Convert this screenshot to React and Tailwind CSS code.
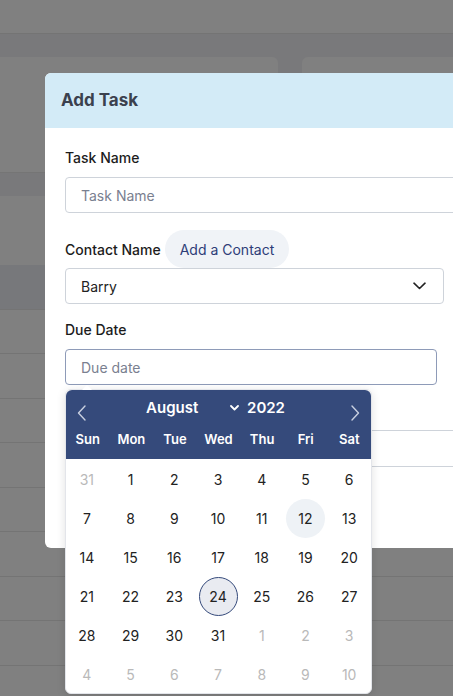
import React from "react";

const weeks = [
  [[31, 0], [1, 1], [2, 1], [3, 1], [4, 1], [5, 1], [6, 1]],
  [[7, 1], [8, 1], [9, 1], [10, 1], [11, 1], [12, 1], [13, 1]],
  [[14, 1], [15, 1], [16, 1], [17, 1], [18, 1], [19, 1], [20, 1]],
  [[21, 1], [22, 1], [23, 1], [24, 1], [25, 1], [26, 1], [27, 1]],
  [[28, 1], [29, 1], [30, 1], [31, 1], [1, 0], [2, 0], [3, 0]],
  [[4, 0], [5, 0], [6, 0], [7, 0], [8, 0], [9, 0], [10, 0]],
];

const dayNames = ["Sun", "Mon", "Tue", "Wed", "Thu", "Fri", "Sat"];

function DayCell({ d, cur }) {
  const selected = cur && d === 24;
  const today = cur && d === 12;
  let cls =
    "w-[39px] h-[39px] rounded-full flex items-center justify-center text-[14px] ";
  if (!cur) cls += "text-[#b9b9b9]";
  else cls += "text-[#222222]";
  if (selected) cls += " bg-[#e9ebf1] border border-[#354a7b]";
  if (today) cls += " bg-[#eef2f6]";
  return (
    <div className="w-[44px] h-[39px] flex items-center justify-center">
      <div className={cls}>{d}</div>
    </div>
  );
}

export default function App() {
  const rows = Array.from({ length: 9 });
  return (
    <div
      className="relative w-[453px] h-[696px] overflow-hidden bg-[#79797b]"
      style={{ fontFamily: "Inter, 'Noto Sans', sans-serif" }}
    >
      {/* background page (under overlay) */}
      <div className="h-[34px] bg-[#808080] border-b border-[#747474]" />
      <div className="flex gap-[24px] mt-[23px]">
        <div className="w-[278px] h-[116px] rounded-r-md bg-[#808080] border-b border-[#757575]" />
        <div className="flex-1 h-[116px] rounded-l-md bg-[#808080] border-b border-[#757575]" />
      </div>
      <div className="mt-[23px] bg-[#808080]">
        <div className="h-[69px]" />
        <div className="h-[44.5px] bg-[#77787b] border-b border-[#747474]" />
        {rows.map((_, i) => (
          <div key={i} className="h-[44.5px] border-b border-[#747474]" />
        ))}
      </div>

      {/* modal */}
      <div className="absolute left-[45px] top-[73px] w-[520px] h-[475px] rounded-l-md bg-white overflow-hidden">
        <div className="h-[55px] bg-[#d3ebf7] flex items-center pl-[16px]">
          <span className="text-[17px] font-bold text-[#3b414e]">Add Task</span>
        </div>
        <div className="px-[20px] pt-[20px]">
          <div className="text-[14px] leading-[20px] font-medium text-[#1c1c1c]">Task Name</div>
          <div className="mt-[9px] h-[36px] w-full rounded-[4px] border border-[#ced3da] flex items-center pl-[15px] text-[14px] text-[#7a8090]">
            Task Name
          </div>
          <div className="mt-[17px] h-[38px] flex items-center">
            <span className="text-[14px] font-medium text-[#1c1c1c]">Contact Name</span>
            <span className="ml-[4px] h-[38px] px-[15px] rounded-full bg-[#f0f3f7] flex items-center text-[14px] text-[#2e3d78]">
              Add a Contact
            </span>
          </div>
          <div className="h-[36px] w-[379px] rounded-[4px] border border-[#ced3da] flex items-center justify-between pl-[15px] pr-[17px] text-[14px] text-[#222222]">
            <span>Barry</span>
            <svg width="13" height="8" viewBox="0 0 13 8" fill="none">
              <path d="M1 1.2 L6.5 6.5 L12 1.2" stroke="#222" strokeWidth="1.6" strokeLinecap="round" strokeLinejoin="round" />
            </svg>
          </div>
          <div className="mt-[16px] text-[14px] leading-[20px] font-medium text-[#1c1c1c]">Due Date</div>
          <div className="mt-[9px] h-[36px] w-[372px] rounded-[4px] border border-[#8e9bb8] flex items-center pl-[15px] text-[14px] text-[#7a8090]">
            Due date
          </div>
          <div className="mt-[10px] text-[14px] leading-[20px] font-medium text-[#1c1c1c]">Assigned To</div>
          <div className="mt-[15px] h-[37px] w-full rounded-[4px] border border-[#ced3da]" />
        </div>
      </div>

      {/* date picker popover */}
      <div className="absolute left-[65px] top-[389px] w-[307px] h-[305px] rounded-md bg-white border border-[#e3e5ea] shadow-[0_2px_10px_rgba(0,0,0,0.12)]">
        <div className="h-[69px] rounded-t-md bg-[#354a7b] text-white">
          <div className="relative h-[36px] flex items-center justify-center">
            <svg className="absolute left-[11px] top-[15px]" width="9" height="16" viewBox="0 0 9 16" fill="none">
              <path d="M8 1 L1.5 8 L8 15" stroke="#c9d0e0" strokeWidth="1.4" strokeLinecap="round" strokeLinejoin="round" />
            </svg>
            <div className="flex items-center ml-[-6px]">
              <div className="w-[95px] flex items-center justify-between">
                <span className="text-[15px] font-semibold">August</span>
                <svg width="9" height="6" viewBox="0 0 9 6" fill="none" className="mr-[2px]">
                  <path d="M1 1 L4.5 4.5 L8 1" stroke="white" strokeWidth="1.8" strokeLinecap="round" strokeLinejoin="round" />
                </svg>
              </div>
              <span className="ml-[6px] text-[15px] font-semibold">2022</span>
            </div>
            <svg className="absolute right-[11px] top-[15px]" width="9" height="16" viewBox="0 0 9 16" fill="none">
              <path d="M1 1 L7.5 8 L1 15" stroke="#c9d0e0" strokeWidth="1.4" strokeLinecap="round" strokeLinejoin="round" />
            </svg>
          </div>
          <div className="flex h-[28px] items-center">
            {dayNames.map((n) => (
              <div key={n} className="w-[44px] text-center text-[13px] font-semibold">
                {n}
              </div>
            ))}
          </div>
        </div>
        <div className="pt-[1px] -ml-[1px]">
          {weeks.map((w, i) => (
            <div key={i} className="flex">
              {w.map(([d, cur], j) => (
                <DayCell key={j} d={d} cur={cur} />
              ))}
            </div>
          ))}
        </div>
        <div className="absolute left-[16px] -top-[5px] w-0 h-0 border-l-[5px] border-r-[5px] border-b-[5px] border-l-transparent border-r-transparent border-b-white" />
      </div>
    </div>
  );
}
